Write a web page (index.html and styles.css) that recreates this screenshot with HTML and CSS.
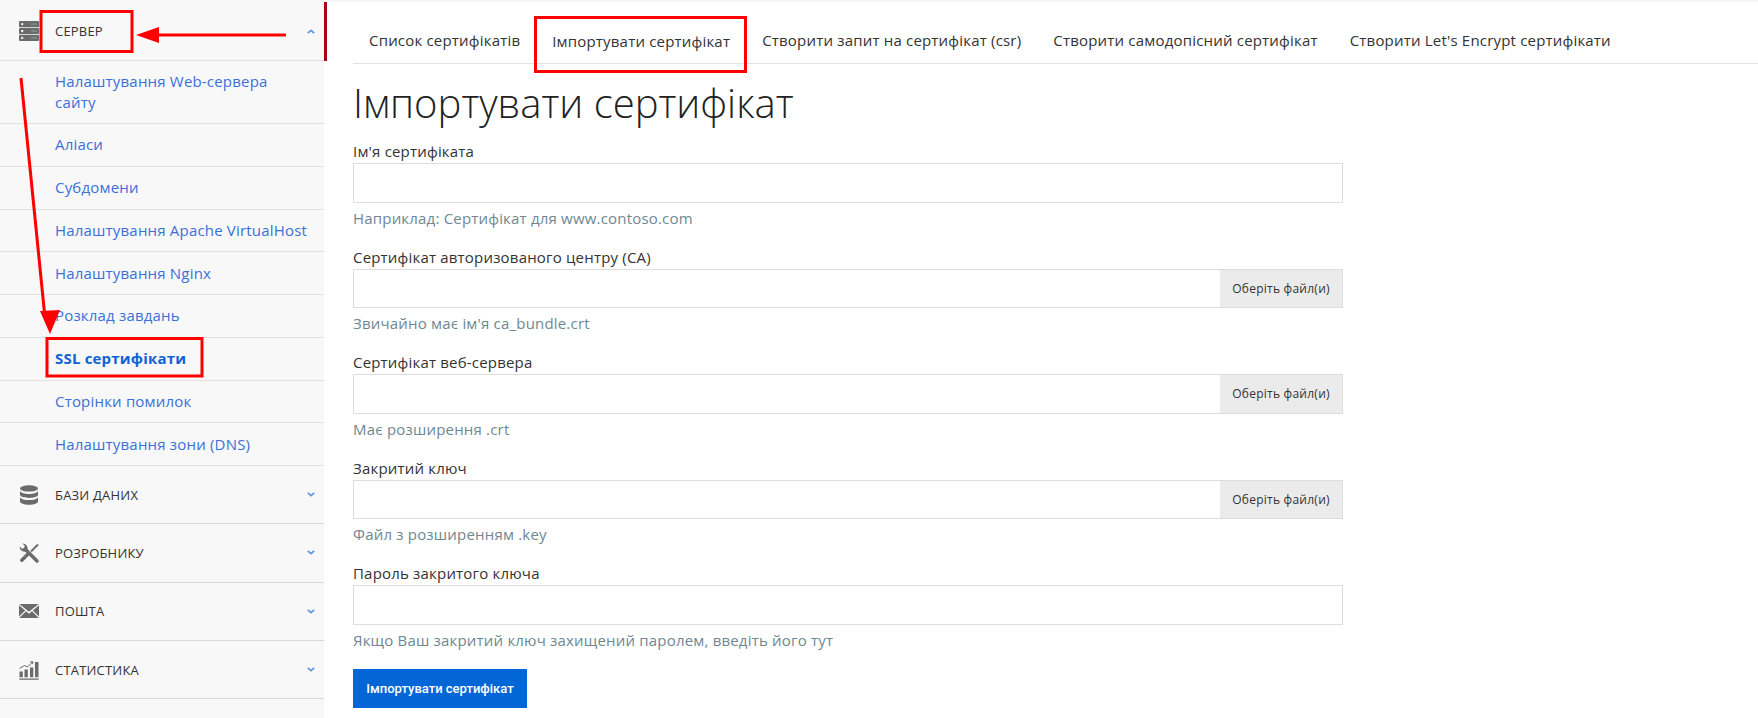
FILE: index.html
```html
<!DOCTYPE html>
<html lang="uk">
<head>
    <meta charset="UTF-8">
    <meta name="viewport" content="width=device-width, initial-scale=1.0">
    <title>Імпортувати сертифікат</title>
    <link rel="stylesheet" href="styles.css">
</head>
<body>
    <div class="page">
        <aside class="sidebar">
            <div class="menu-group open">
                <svg class="menu-icon" viewBox="0 0 20 20">
                    <rect x="0" y="0" width="20" height="6.2" rx="1"/>
                    <rect x="0" y="6.9" width="20" height="6.2" rx="1"/>
                    <rect x="0" y="13.8" width="20" height="6.2" rx="1"/>
                    <circle cx="3.2" cy="3.1" r="1.2" fill="#eee"/>
                    <circle cx="3.2" cy="10" r="1.2" fill="#eee"/>
                    <circle cx="3.2" cy="16.9" r="1.2" fill="#eee"/>
                    <path d="M12 3.1h6M12 10h6M12 16.9h6" stroke="#999" stroke-width="1"/>
                </svg>
                <span class="menu-title">Сервер</span>
                <svg class="chevron" viewBox="0 0 10 6"><path d="M1 5l4-3.5L9 5"/></svg>
            </div>
            <a class="menu-link tall" href="#">Налаштування Web-сервера сайту</a>
            <a class="menu-link" href="#">Аліаси</a>
            <a class="menu-link" href="#">Субдомени</a>
            <a class="menu-link" href="#">Налаштування Apache VirtualHost</a>
            <a class="menu-link" href="#">Налаштування Nginx</a>
            <a class="menu-link" href="#">Розклад завдань</a>
            <a class="menu-link current" href="#">SSL сертифікати</a>
            <a class="menu-link" href="#">Сторінки помилок</a>
            <a class="menu-link" href="#">Налаштування зони (DNS)</a>
            <div class="menu-group">
                <svg class="menu-icon" viewBox="0 0 20 20">
                    <ellipse cx="10" cy="3.4" rx="9" ry="3.2"/>
                    <path d="M1 6c1 2 4.700 3 9 3s8-1 9-3v3.800c0 1.900-4 3.100-9 3.100s-9-1.200-9-3.100z"/>
                    <path d="M1 12.200c1 2 4.700 2.900 9 2.900s8-.9 9-2.900v4.400c0 1.900-4 3.200-9 3.200s-9-1.300-9-3.200z"/>
                </svg>
                <span class="menu-title">Бази даних</span>
                <svg class="chevron" viewBox="0 0 10 6"><path d="M1 1l4 3.500L9 1"/></svg>
            </div>
            <div class="menu-group">
                <svg class="menu-icon" viewBox="0 0 20 20">
                    <path d="M3.500.6L5.800 3 5 5 3 5.800.6 3.500A4.800 4.800 0 0 0 6.500 8.500L8.500 6.500A4.800 4.800 0 0 0 3.500.6z"/>
                    <path d="M7 7l11 11" class="tool-line wide"/>
                    <path d="M19 1.500L12 8.500" class="tool-line"/>
                    <path d="M9.500 10.500L2.800 17.200" class="tool-line wide"/>
                </svg>
                <span class="menu-title">Розробнику</span>
                <svg class="chevron" viewBox="0 0 10 6"><path d="M1 1l4 3.500L9 1"/></svg>
            </div>
            <div class="menu-group">
                <svg class="menu-icon" viewBox="0 0 20 20">
                    <path d="M.3 3h19.400L10 10.800z"/>
                    <path d="M0 4.200l6.200 5.400L0 15.400zM20 4.200l-6.200 5.400 6.200 5.800zM7 10.300l3 2.400 3-2.400 6.800 6.700H.200z"/>
                </svg>
                <span class="menu-title">Пошта</span>
                <svg class="chevron" viewBox="0 0 10 6"><path d="M1 1l4 3.500L9 1"/></svg>
            </div>
            <div class="menu-group">
                <svg class="menu-icon" viewBox="0 0 20 20">
                    <path d="M.5 11.500h3.300v5.700H.5zM5.500 9.500h3.300v7.700H5.500zM11 7.500h3.300v9.700H11zM16 2h3.500v15.200H16zM.3 18.500h19.400v1.200H.3z"/>
                    <path d="M.5 8.500l5-3 3 1.500 4.500-4.500" fill="none" stroke="#6b6b6b" stroke-width="1"/>
                    <path d="M10.800 1.200h3.400v3.200z"/>
                </svg>
                <span class="menu-title">Статистика</span>
                <svg class="chevron" viewBox="0 0 10 6"><path d="M1 1l4 3.500L9 1"/></svg>
            </div>
        </aside>
        <main class="content">
            <nav class="tabs">
                <a class="tab" href="#">Список сертифікатів</a>
                <a class="tab active" href="#">Імпортувати сертифікат</a>
                <a class="tab" href="#">Створити запит на сертифікат (csr)</a>
                <a class="tab" href="#">Створити самодопісний сертифікат</a>
                <a class="tab" href="#">Створити Let's Encrypt сертифікати</a>
            </nav>
            <h1>Імпортувати сертифікат</h1>
            <form class="cert-form">
                <div class="field">
                    <label>Ім'я сертифіката</label>
                    <div class="input-row"><input type="text"></div>
                    <p class="hint">Наприклад: Сертифікат для www.contoso.com</p>
                </div>
                <div class="field">
                    <label>Сертифікат авторизованого центру (CA)</label>
                    <div class="input-row"><input type="text"><span class="file-btn">Оберіть файл(и)</span></div>
                    <p class="hint">Звичайно має ім'я ca_bundle.crt</p>
                </div>
                <div class="field">
                    <label>Сертифікат веб-сервера</label>
                    <div class="input-row"><input type="text"><span class="file-btn">Оберіть файл(и)</span></div>
                    <p class="hint">Має розширення .crt</p>
                </div>
                <div class="field">
                    <label>Закритий ключ</label>
                    <div class="input-row"><input type="text"><span class="file-btn">Оберіть файл(и)</span></div>
                    <p class="hint">Файл з розширенням .key</p>
                </div>
                <div class="field">
                    <label>Пароль закритого ключа</label>
                    <div class="input-row"><input type="password"></div>
                    <p class="hint">Якщо Ваш закритий ключ захищений паролем, введіть його тут</p>
                </div>
                <button class="submit" type="button">Імпортувати сертифікат</button>
            </form>
        </main>
    </div>
    <!-- red marks drawn on top of the screenshot -->
    <svg class="marks" viewBox="0 0 1758 718">
        <g fill="none" stroke="#fe0000" stroke-width="3">
            <rect x="41" y="11.500" width="91" height="40"/>
            <rect x="47" y="338.500" width="155" height="37.500"/>
            <rect x="535.500" y="17.500" width="210" height="54"/>
            <path d="M286 35H150M21 78l24 240"/>
        </g>
        <path fill="#fe0000" d="M136 35l23-8v16zM50 334l-10-23 20-1z"/>
    </svg>
</body>
</html>
```

FILE: styles.css
```css
html, body {
    margin: 0;
    padding: 0;
    height: 100%;
    background: #fff;
    font-family: 'Open Sans', sans-serif;
    font-size: 15px;
    letter-spacing: 0.19px;
    color: #333;
    overflow: hidden;
}
* {
    box-sizing: border-box;
}
.page {
    display: flex;
    height: 718px;
    border-top: 2px solid #f6f6f6;
}
.sidebar {
    width: 324px;
    flex-shrink: 0;
    background: #f8f8f8;
    display: flex;
    flex-direction: column;
}
.menu-group {
    display: flex;
    align-items: center;
    height: 58.300px;
    flex-shrink: 0;
    padding: 0 9px 0 19px;
    border-bottom: 1px solid #d8d8d8;
}
.menu-group.open {
    height: 59px;
    border-bottom-color: #e2e2e2;
    box-shadow: 3px 0 0 #a80016;
}
.menu-icon {
    width: 20px;
    height: 20px;
    fill: #6b6b6b;
    flex-shrink: 0;
}
.tool-line {
    fill: none;
    stroke: #6b6b6b;
    stroke-width: 2;
}
.tool-line.wide {
    stroke-width: 3.400;
    stroke-linecap: round;
}
.menu-title {
    flex: 1;
    margin-left: 16px;
    font-size: 13px;
    letter-spacing: 0.2px;
    text-transform: uppercase;
    color: #333;
}
.chevron {
    width: 8px;
    height: 5px;
    fill: none;
    stroke: #5b94e0;
    stroke-width: 2;
}
.menu-link {
    display: flex;
    align-items: center;
    height: 42.750px;
    flex-shrink: 0;
    padding: 0 15px 0 55px;
    border-bottom: 1px solid #e2e2e2;
    color: #3a70d8;
    line-height: 21px;
    text-decoration: none;
}
.menu-link.tall {
    height: 63px;
}
.menu-link.current {
    color: #0f62d6;
    font-weight: 700;
}
.content {
    flex: 1;
    min-width: 0;
    padding-left: 29px;
}
.tabs {
    display: flex;
    height: 62px;
    padding-top: 14px;
    border-bottom: 1px solid #e2e2e2;
}
.tab {
    display: flex;
    align-items: center;
    padding: 0 16px;
    color: #333;
    white-space: nowrap;
    text-decoration: none;
}
.tab.active {
    padding-top: 2px;
}
h1 {
    margin: 0;
    padding-top: 8px;
    font-size: 40px;
    line-height: 62px;
    font-weight: 300;
    letter-spacing: 0;
    color: #222;
}
.cert-form {
    width: 990px;
    margin-top: 7px;
}
.field {
    height: 105.500px;
}
.field label {
    display: block;
    height: 22px;
    line-height: 20px;
    color: #333;
}
.input-row {
    display: flex;
    height: 39.500px;
    border: 1px solid #ddd;
    background: #fff;
}
.input-row input {
    flex: 1;
    min-width: 0;
    border: 0;
    padding: 0 10px;
    background: transparent;
}
.file-btn {
    display: flex;
    align-items: center;
    justify-content: center;
    width: 122px;
    background: #ebebeb;
    font-size: 12px;
    letter-spacing: 0.25px;
    color: #333;
}
.hint {
    margin: 4px 0 0;
    line-height: 22px;
    color: #6f8793;
}
.submit {
    display: block;
    width: 174px;
    height: 39px;
    padding: 0;
    border: 0;
    background: #0366d6;
    color: #fff;
    font-family: Roboto, sans-serif;
    font-size: 13px;
    font-weight: 500;
    letter-spacing: 0;
}
.marks {
    position: absolute;
    left: 0;
    top: 0;
    width: 1758px;
    height: 718px;
    pointer-events: none;
}
```
